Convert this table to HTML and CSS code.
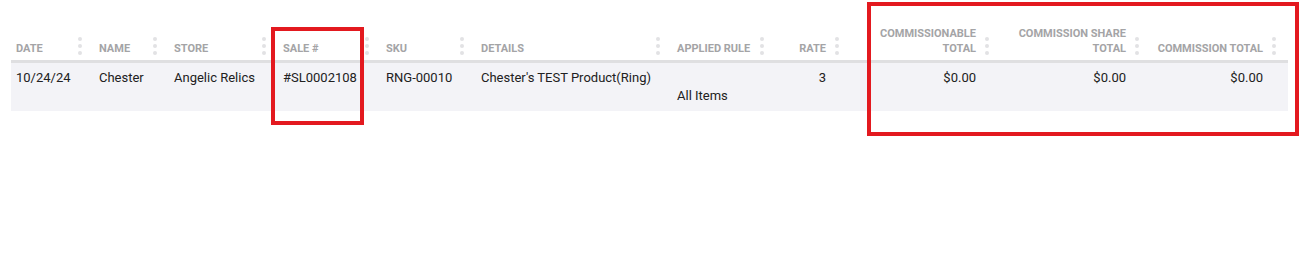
FILE: index.html
```html
<!DOCTYPE html>
<html lang="en">
<head>
<meta charset="utf-8">
<title>Commission report</title>
<link rel="stylesheet" href="styles.css">
</head>
<body>
<div class="page">
  <div class="report">
    <div class="row head">
      <div class="hcell first"><span class="label">Date</span><span class="dots"><i></i><i></i><i></i></span></div>
      <div class="hcell"><span class="label">Name</span><span class="dots"><i></i><i></i><i></i></span></div>
      <div class="hcell"><span class="label">Store</span><span class="dots"><i></i><i></i><i></i></span></div>
      <div class="hcell"><span class="label">Sale #</span><span class="dots"><i></i><i></i><i></i></span></div>
      <div class="hcell"><span class="label">SKU</span><span class="dots"><i></i><i></i><i></i></span></div>
      <div class="hcell"><span class="label">Details</span><span class="dots"><i></i><i></i><i></i></span></div>
      <div class="hcell"><span class="label">Applied Rule</span><span class="dots"><i></i><i></i><i></i></span></div>
      <div class="hcell num"><span class="label">Rate</span><span class="dots"><i></i><i></i><i></i></span></div>
      <div class="hcell num"><span class="label">Commissionable Total</span><span class="dots"><i></i><i></i><i></i></span></div>
      <div class="hcell num"><span class="label">Commission Share Total</span><span class="dots"><i></i><i></i><i></i></span></div>
      <div class="hcell num"><span class="label">Commission Total</span><span class="dots"><i></i><i></i><i></i></span></div>
    </div>
    <div class="row body">
      <div class="cell first">10/24/24</div>
      <div class="cell">Chester</div>
      <div class="cell">Angelic Relics</div>
      <div class="cell">#SL0002108</div>
      <div class="cell">RNG-00010</div>
      <div class="cell">Chester's TEST Product(Ring)</div>
      <div class="cell"><div class="spacer"></div><div>All Items</div></div>
      <div class="cell num">3</div>
      <div class="cell num">$0.00</div>
      <div class="cell num">$0.00</div>
      <div class="cell num">$0.00</div>
    </div>
  </div>
  <div class="mark mark-sale"></div>
  <div class="mark mark-totals"></div>
</div>
</body>
</html>
```

FILE: styles.css
```css
html, body {
  margin: 0;
  padding: 0;
  background: #ffffff;
}

body {
  font-family: Roboto, "Liberation Sans", Arial, sans-serif;
  color: #212121;
}

.page {
  position: relative;
  width: 1310px;
  height: 268px;
  padding: 20px 0 0 11px;
  box-sizing: border-box;
}

.report {
  width: 1277px;
}

.row {
  display: grid;
  grid-template-columns: 72px 75px 109px 103px 95px 196px 104px 75px 150px 150px 137px 11px;
}

.head {
  border-bottom: 3px solid #dfdfe1;
}

.hcell {
  display: flex;
  align-items: flex-end;
  gap: 9px;
  padding: 6px 1px 4px 16px;
  font-size: 11px;
  line-height: 15px;
  font-weight: 700;
  text-transform: uppercase;
  color: #a4a4a6;
}

.hcell.first {
  padding-left: 5px;
}

.hcell .label {
  flex: 1;
  min-width: 0;
}

.hcell.num {
  padding-left: 8px;
}

.hcell.num .label {
  text-align: right;
}

.dots {
  display: flex;
  flex-direction: column;
  gap: 3px;
  flex: none;
  margin-bottom: 1px;
}

.dots i {
  display: block;
  width: 4px;
  height: 4px;
  border-radius: 50%;
  background: #e2e2e4;
}

.body {
  background: #f3f3f7;
}

.cell {
  padding: 6px 14px 6px 16px;
  font-size: 13px;
  line-height: 18px;
  white-space: nowrap;
}

.cell.first {
  padding-left: 5px;
}

.cell.num {
  text-align: right;
  padding-left: 8px;
}

.spacer {
  height: 18px;
}

.mark {
  position: absolute;
  box-sizing: border-box;
  border: 4px solid #e3191f;
}

.mark-sale {
  left: 271px;
  top: 27px;
  width: 93px;
  height: 98px;
}

.mark-totals {
  left: 867px;
  top: 2px;
  width: 432px;
  height: 134px;
}
```
